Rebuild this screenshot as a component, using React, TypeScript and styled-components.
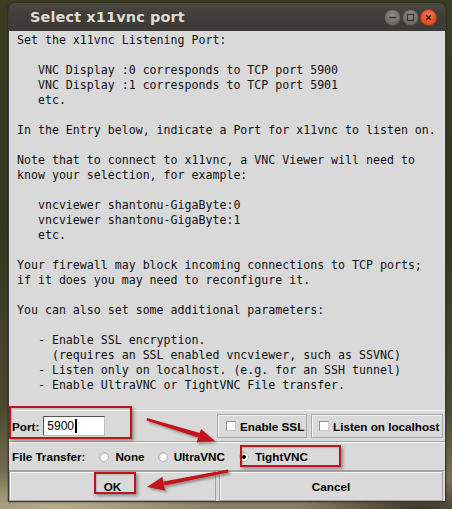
import React from "react";
import styled, { createGlobalStyle } from "styled-components";

const GlobalStyle = createGlobalStyle`
  html, body { margin: 0; padding: 0; }
  body {
    width: 452px;
    height: 509px;
    overflow: hidden;
    background:
      radial-gradient(ellipse 160px 40px at 60px 509px, #b9ad8c 0%, rgba(185,173,140,0) 100%),
      radial-gradient(ellipse 120px 30px at 420px 509px, #3e3427 0%, rgba(62,52,39,0) 100%),
      linear-gradient(to bottom, #3b3d20 0%, #34371d 45%, #4a4a2e 80%, #8a8063 100%);
  }
`;

const Page = styled.div`
  position: relative;
  width: 452px;
  height: 509px;
  box-sizing: border-box;
  padding: 3px 6px 0 8px;
`;

const Window = styled.div`
  width: 438px;
  box-sizing: border-box;
  background: #3c3b37;
  border-radius: 6px 6px 0 0;
  padding: 0 1px 1px;
  box-shadow: 0 0 2px rgba(0, 0, 0, 0.6);
`;

const TitleBar = styled.div`
  height: 28px;
  display: flex;
  align-items: center;
  justify-content: space-between;
  padding: 0 8px 0 21px;
  border-radius: 6px 6px 0 0;
  background: linear-gradient(to bottom, #4b4a45 0%, #3f3e3a 40%, #3c3b37 100%);
`;

const Title = styled.span`
  font-family: "DejaVu Sans", sans-serif;
  font-weight: bold;
  font-size: 14.5px;
  color: #dfdbd2;
  letter-spacing: 0.1px;
`;

const Controls = styled.div`
  display: flex;
  gap: 1px;
  margin-top: 1px;
`;

const WinButton = styled.div<{ $close?: boolean }>`
  width: 17px;
  height: 17px;
  border-radius: 50%;
  box-sizing: border-box;
  display: flex;
  align-items: center;
  justify-content: center;
  border: 1px solid ${(p) => (p.$close ? "#a8391a" : "#4a4945")};
  background: ${(p) =>
    p.$close
      ? "radial-gradient(circle at 50% 35%, #f47a4a 0%, #e7542a 55%, #cf4318 100%)"
      : "radial-gradient(circle at 50% 35%, #8e8c86 0%, #74726d 55%, #605f5a 100%)"};
`;

const Body = styled.div`
  background: #d9d9d9;
  display: flex;
  flex-direction: column;
`;

const Message = styled.pre`
  margin: 0;
  height: 379px;
  box-sizing: border-box;
  padding: 2px 0 0 8px;
  font-family: "DejaVu Sans Mono", monospace;
  font-size: 11.6px;
  line-height: 15px;
  color: #111;
`;

const Row = styled.div<{ $h: number }>`
  height: ${(p) => p.$h}px;
  box-sizing: border-box;
  display: flex;
  align-items: center;
  border-top: 1px solid #f7f7f7;
  border-bottom: 1px solid #a4a4a4;
  padding: 0 2px 0 3px;
  gap: 4px;
`;

const Label = styled.span`
  font-family: "Liberation Sans", Arial, sans-serif;
  font-weight: bold;
  font-size: 11.7px;
  color: #000;
  white-space: nowrap;
`;

const PortGroup = styled.div`
  flex: 1;
  display: flex;
  align-items: center;
  gap: 4px;
`;

const Entry = styled.div`
  width: 62px;
  height: 20px;
  box-sizing: border-box;
  background: #fff;
  border: 1px solid #555;
  border-right-color: #bdbdbd;
  border-bottom-color: #bdbdbd;
  display: flex;
  align-items: center;
  padding-left: 3px;
  font-family: "Liberation Sans", Arial, sans-serif;
  font-size: 12px;
  color: #000;
`;

const Caret = styled.span`
  display: inline-block;
  width: 2px;
  height: 14px;
  background: #000;
  margin-left: 1px;
`;

const CheckButton = styled.div<{ $w: number; $pl: number }>`
  width: ${(p) => p.$w}px;
  height: 24px;
  box-sizing: border-box;
  display: flex;
  align-items: center;
  gap: 4px;
  padding-left: ${(p) => p.$pl}px;
  border: 1px solid #a9a9a9;
  box-shadow: inset 1px 1px 0 #f6f6f6;
`;

const CheckBox = styled.span`
  width: 10px;
  height: 10px;
  box-sizing: border-box;
  background: #fff;
  border: 1px solid #8f8f8f;
  border-right-color: #c9c9c9;
  border-bottom-color: #c9c9c9;
`;

const Radio = styled.label<{ $ml: number }>`
  display: flex;
  align-items: center;
  gap: 6px;
  margin-left: ${(p) => p.$ml}px;
`;

const RadioDot = styled.span<{ $on?: boolean }>`
  width: 10px;
  height: 10px;
  box-sizing: border-box;
  border-radius: 50%;
  border: 1px solid #b2b2b2;
  background: #fff;
  box-shadow: inset 1px 1px 1px #cfcfcf;
  display: flex;
  align-items: center;
  justify-content: center;
  &::after {
    content: "";
    display: ${(p) => (p.$on ? "block" : "none")};
    width: 4px;
    height: 4px;
    border-radius: 50%;
    background: #000;
  }
`;

const ButtonRow = styled.div`
  height: 30px;
  display: flex;
  gap: 3px;
  padding-right: 2px;
`;

const PushButton = styled.div<{ $w: number }>`
  width: ${(p) => p.$w}px;
  box-sizing: border-box;
  display: flex;
  align-items: center;
  justify-content: center;
  border: 1px solid #a2a2a2;
  box-shadow: inset 1px 1px 0 #f6f6f6;
`;

const Annotation = styled.div<{ $x: number; $y: number; $w: number; $h: number }>`
  position: absolute;
  left: ${(p) => p.$x}px;
  top: ${(p) => p.$y}px;
  width: ${(p) => p.$w}px;
  height: ${(p) => p.$h}px;
  box-sizing: border-box;
  border: 2px solid #c0141d;
  box-shadow: 2px 2px 3px rgba(0, 0, 0, 0.35), inset 1px 1px 2px rgba(0, 0, 0, 0.15);
  pointer-events: none;
`;

const ArrowLayer = styled.svg`
  position: absolute;
  left: 0;
  top: 0;
  pointer-events: none;
`;

const text = `Set the x11vnc Listening Port:

   VNC Display :0 corresponds to TCP port 5900
   VNC Display :1 corresponds to TCP port 5901
   etc.

In the Entry below, indicate a Port for x11vnc to listen on.

Note that to connect to x11vnc, a VNC Viewer will need to
know your selection, for example:

   vncviewer shantonu-GigaByte:0
   vncviewer shantonu-GigaByte:1
   etc.

Your firewall may block incoming connections to TCP ports;
if it does you may need to reconfigure it.

You can also set some additional parameters:

   - Enable SSL encryption.
     (requires an SSL enabled vncviewer, such as SSVNC)
   - Listen only on localhost. (e.g. for an SSH tunnel)
   - Enable UltraVNC or TightVNC File transfer.`;

export default function App() {
  return (
    <>
      <GlobalStyle />
      <Page>
        <Window>
          <TitleBar>
            <Title>Select x11vnc port</Title>
            <Controls>
              <WinButton>
                <svg width="9" height="9" viewBox="0 0 9 9">
                  <line x1="1" y1="4.5" x2="8" y2="4.5" stroke="#35342f" strokeWidth="1.4" />
                </svg>
              </WinButton>
              <WinButton>
                <svg width="9" height="9" viewBox="0 0 9 9">
                  <rect x="1.5" y="1.5" width="6" height="6" fill="none" stroke="#35342f" strokeWidth="1.2" />
                </svg>
              </WinButton>
              <WinButton $close>
                <svg width="9" height="9" viewBox="0 0 9 9">
                  <path d="M2 2 L7 7 M7 2 L2 7" stroke="#3a1a0c" strokeWidth="1.4" />
                </svg>
              </WinButton>
            </Controls>
          </TitleBar>
          <Body>
            <Message>{text}</Message>
            <Row $h={32}>
              <PortGroup>
                <Label>Port:</Label>
                <Entry>
                  5900
                  <Caret />
                </Entry>
              </PortGroup>
              <CheckButton $w={90} $pl={8}>
                <CheckBox />
                <Label>Enable SSL</Label>
              </CheckButton>
              <CheckButton $w={132} $pl={7}>
                <CheckBox />
                <Label>Listen on localhost</Label>
              </CheckButton>
            </Row>
            <Row $h={29}>
              <Label>File Transfer:</Label>
              <Radio $ml={10}>
                <RadioDot />
                <Label>None</Label>
              </Radio>
              <Radio $ml={9}>
                <RadioDot />
                <Label>UltraVNC</Label>
              </Radio>
              <Radio $ml={10}>
                <RadioDot $on />
                <Label>TightVNC</Label>
              </Radio>
            </Row>
            <ButtonRow>
              <PushButton $w={207}>
                <Label>OK</Label>
              </PushButton>
              <PushButton $w={224}>
                <Label>Cancel</Label>
              </PushButton>
            </ButtonRow>
          </Body>
        </Window>
        <Annotation $x={9} $y={406} $w={123} $h={33} />
        <Annotation $x={240} $y={445} $w={101} $h={22} />
        <Annotation $x={94} $y={472} $w={42} $h={22} />
        <ArrowLayer width="452" height="509" viewBox="0 0 452 509">
          <defs>
            <filter id="sh" x="-20%" y="-20%" width="140%" height="140%">
              <feDropShadow dx="2" dy="2" stdDeviation="1.2" floodColor="#000" floodOpacity="0.35" />
            </filter>
          </defs>
          <g fill="#c0141d" filter="url(#sh)">
            <polygon points="147,418 200,433 198,437.5 146.5,420.5" />
            <polygon points="215,441 196.6,442.5 201,429.1" />
            <polygon points="228,469.5 228.5,472.5 164.5,485.5 163.5,481.5" />
            <polygon points="147,487 165,490.6 162.3,476.8" />
          </g>
        </ArrowLayer>
      </Page>
    </>
  );
}
